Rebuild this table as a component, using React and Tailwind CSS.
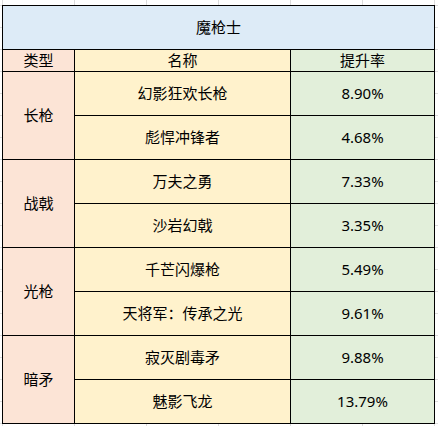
import React from "react";

const groups = [
    {type: "长枪", items: [["幻影狂欢长枪", "8.90%"], ["彪悍冲锋者", "4.68%"]]},
    {type: "战戟", items: [["万夫之勇", "7.33%"], ["沙岩幻戟", "3.35%"]]},
    {type: "光枪", items: [["千芒闪爆枪", "5.49%"], ["天将军：传承之光", "9.61%"]]},
    {type: "暗矛", items: [["寂灭剧毒矛", "9.88%"], ["魅影飞龙", "13.79%"]]},
];

const cell = "flex items-center justify-center";

export default function App() {
    return (
        <div
            className="w-[438px] h-[426px] overflow-hidden bg-white bg-[linear-gradient(to_right,#dcdcdc_1px,transparent_1px),linear-gradient(to_bottom,#dcdcdc_1px,transparent_1px)] bg-size-[72px_22px] bg-position-[2px_5px] pt-[5px] pl-[2px]"
            style={{fontFamily: "'Noto Sans', 'Noto Sans CJK SC', sans-serif"}}
        >
            <div className="inline-grid grid-cols-[71px_215px_143px] grid-rows-[43px_21px_repeat(8,43px)] gap-px p-px bg-black text-[15px] text-black leading-none">
                <div className={`${cell} col-span-3 bg-[#ddebf7]`}>魔枪士</div>
                <div className={`${cell} bg-[#fce4d6]`}>类型</div>
                <div className={`${cell} bg-[#fff2cc]`}>名称</div>
                <div className={`${cell} bg-[#e2efda]`}>提升率</div>
                {groups.map((g) => (
                    <React.Fragment key={g.type}>
                        <div className={`${cell} row-span-2 bg-[#fce4d6]`}>{g.type}</div>
                        {g.items.map(([name, rate], i) => (
                            <React.Fragment key={name}>
                                {/* second item row starts at column 2 after the spanned type cell */}
                                <div className={`${cell} bg-[#fff2cc] ${i === 1 ? "col-start-2" : ""}`}>{name}</div>
                                <div className={`${cell} bg-[#e2efda]`}>{rate}</div>
                            </React.Fragment>
                        ))}
                    </React.Fragment>
                ))}
            </div>
        </div>
    );
}
